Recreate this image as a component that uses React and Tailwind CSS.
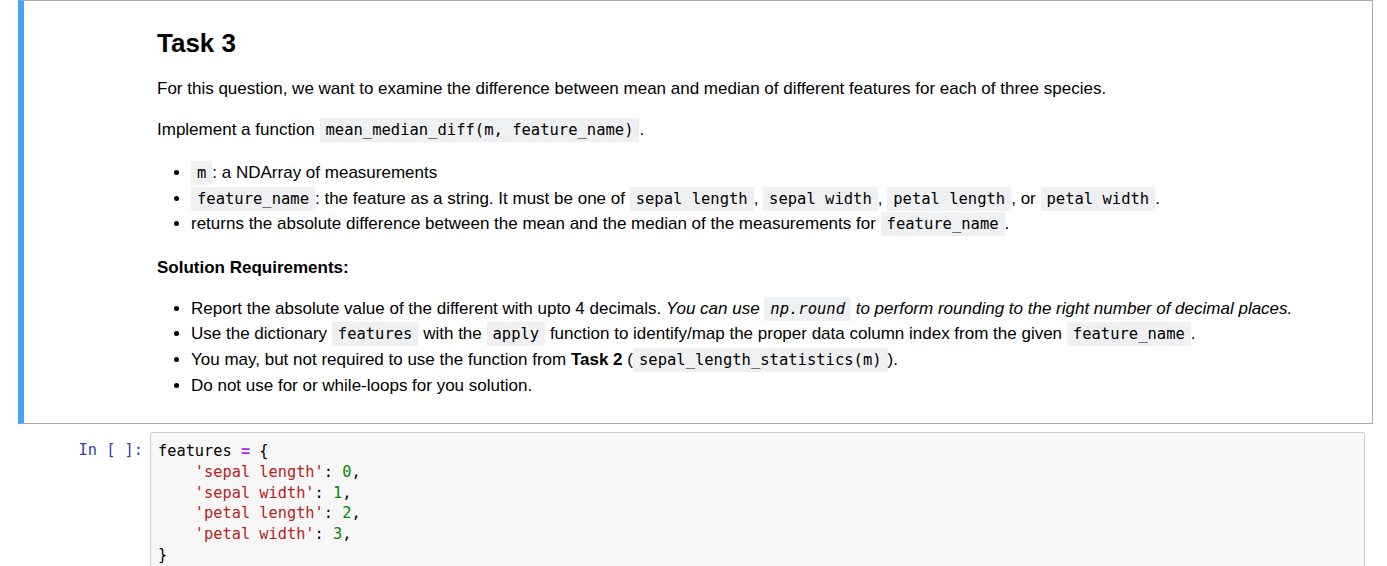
import React from 'react'

const sans = "font-['Liberation_Sans',Arial,sans-serif]"
const mono = "font-['DejaVu_Sans_Mono','Liberation_Mono',monospace]"

function C({ children }) {
  return (
    <code className={`${mono} text-[15.5px] leading-none bg-[#eff0f1] px-[6px] py-[3px] text-black`}>{children}</code>
  )
}

const codeLines = [
  [['t', 'features '], ['op', '='], ['t', ' {']],
  [['t', '    '], ['s', "'sepal length'"], ['t', ': '], ['n', '0'], ['t', ',']],
  [['t', '    '], ['s', "'sepal width'"], ['t', ': '], ['n', '1'], ['t', ',']],
  [['t', '    '], ['s', "'petal length'"], ['t', ': '], ['n', '2'], ['t', ',']],
  [['t', '    '], ['s', "'petal width'"], ['t', ': '], ['n', '3'], ['t', ',']],
  [['t', '}']],
]

const tokenColor = {
  t: 'text-black',
  op: 'text-[#aa22ff] font-bold',
  s: 'text-[#ba2121]',
  n: 'text-[#008800]',
}

export default function App() {
  return (
    <div className={`${sans} bg-white w-[1387px] h-[566px] overflow-hidden text-black`}>
      {/* selected markdown cell */}
      <div className="ml-[18px] w-[1355px] h-[424px] border border-[#ababab] border-l-[6px] border-l-[#42a5f5] pl-[133px] pr-4">
        <h3 className="mt-[29px] text-[26px] leading-[26px] font-bold">Task 3</h3>

        <p className="mt-[20px] text-[17px] leading-[25px]">
          For this question, we want to examine the difference between mean and median of different features for each of three species.
        </p>
        <p className="mt-4 text-[17px] leading-[25px]">
          Implement a function <C>mean_median_diff(m, feature_name)</C>.
        </p>

        <ul className="mt-[18px] list-disc pl-[34px] text-[17px] leading-[25.5px]">
          <li><C>m</C>: a NDArray of measurements</li>
          <li>
            <C>feature_name</C>: the feature as a string. It must be one of <C>sepal length</C>, <C>sepal width</C>, <C>petal length</C>, or <C>petal width</C>.
          </li>
          <li>returns the absolute difference between the mean and the median of the measurements for <C>feature_name</C>.</li>
        </ul>

        <h4 className="mt-[18px] text-[17px] leading-[25px] font-bold">Solution Requirements:</h4>

        <ul className="mt-4 list-disc pl-[34px] text-[17px] leading-[25.8px]">
          <li>
            Report the absolute value of the different with upto 4 decimals. <em>You can use <C>np.round</C> to perform rounding to the right number of decimal places.</em>
          </li>
          <li>
            Use the dictionary <C>features</C> with the <C>apply</C> function to identify/map the proper data column index from the given <C>feature_name</C>.
          </li>
          <li>
            You may, but not required to use the function from <strong>Task 2</strong> (<C>sepal_length_statistics(m)</C>).
          </li>
          <li>Do not use for or while-loops for you solution.</li>
        </ul>
      </div>

      {/* code cell */}
      <div className="mt-2 flex">
        <div className={`${mono} w-[150px] pr-[7px] pt-[8px] text-right text-[15.3px] leading-[20.8px] text-[#303f9f]`}>
          In&nbsp;[&nbsp;]:
        </div>
        <div className="w-[1215px] h-[200px] bg-[#f7f7f7] border border-[#cfcfcf] rounded-[2px] pl-[7px] pt-[8px]">
          <pre className={`${mono} text-[15.3px] leading-[20.8px]`}>
            {codeLines.map((line, i) => (
              <div key={i}>
                {line.map(([k, v], j) => (
                  <span key={j} className={tokenColor[k]}>{v}</span>
                ))}
              </div>
            ))}
          </pre>
        </div>
      </div>
    </div>
  )
}
